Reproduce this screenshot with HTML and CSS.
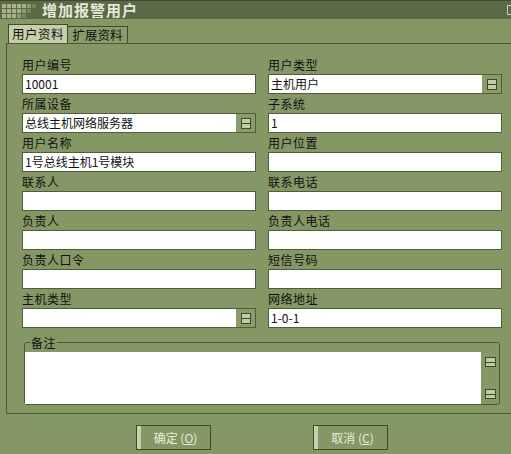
FILE: index.html
```html
<!DOCTYPE html>
<html lang="zh-CN">
<head>
<meta charset="utf-8">
<title>增加报警用户</title>
<link rel="stylesheet" href="styles.css">
</head>
<body>
<div class="titlebar">
  <div class="grip">
    <span></span><span></span><span></span><span></span><span></span><span class="dim"></span><span class="faint"></span>
    <span></span><span></span><span></span><span></span><span class="dim"></span><span class="faint"></span><span class="off"></span>
    <span></span><span></span><span></span><span class="dim"></span><span class="faint"></span><span class="off"></span><span class="off"></span>
  </div>
  <div class="title">增加报警用户</div>
  <div class="close"></div>
</div>
<div class="tabs">
  <div class="tab active">用户资料</div>
  <div class="tab">扩展资料</div>
</div>
<div class="panel">
  <div class="grid">
    <div class="field"><div class="label">用户编号</div><div class="input">10001</div></div>
    <div class="field"><div class="label">用户类型</div><div class="input combo"><span class="ctext">主机用户</span><span class="cbtn"><i class="cicon"></i></span></div></div>
    <div class="field"><div class="label">所属设备</div><div class="input combo"><span class="ctext">总线主机网络服务器</span><span class="cbtn"><i class="cicon"></i></span></div></div>
    <div class="field"><div class="label">子系统</div><div class="input">1</div></div>
    <div class="field"><div class="label">用户名称</div><div class="input">1号总线主机1号模块</div></div>
    <div class="field"><div class="label">用户位置</div><div class="input"></div></div>
    <div class="field"><div class="label">联系人</div><div class="input"></div></div>
    <div class="field"><div class="label">联系电话</div><div class="input"></div></div>
    <div class="field"><div class="label">负责人</div><div class="input"></div></div>
    <div class="field"><div class="label">负责人电话</div><div class="input"></div></div>
    <div class="field"><div class="label">负责人口令</div><div class="input"></div></div>
    <div class="field"><div class="label">短信号码</div><div class="input"></div></div>
    <div class="field"><div class="label">主机类型</div><div class="input combo"><span class="ctext"></span><span class="cbtn"><i class="cicon"></i></span></div></div>
    <div class="field"><div class="label">网络地址</div><div class="input">1-0-1</div></div>
  </div>
  <div class="group">
    <div class="legend">备注</div>
    <div class="memo">
      <div class="memo-text"></div>
      <div class="scroll"><i class="sbtn"></i><i class="sbtn"></i></div>
    </div>
  </div>
</div>
<div class="footer">
  <button class="btn">确定 (<u>O</u>)</button>
  <button class="btn">取消 (<u>C</u>)</button>
</div>
</body>
</html>
```
FILE: styles.css
```css
* { box-sizing: border-box; }
html, body { margin: 0; padding: 0; }
body {
  width: 511px;
  height: 454px;
  overflow: hidden;
  background: #849765;
  font-family: "Noto Sans CJK SC", "Noto Sans", sans-serif;
  font-size: 12px;
  color: #111;
}

.titlebar {
  position: relative;
  height: 19px;
  background: #5a6a46;
  border-top: 1px solid #3e4a30;
  display: flex;
  align-items: center;
}
.grip {
  display: grid;
  grid-template-columns: repeat(7, 4px);
  grid-auto-rows: 4px;
  gap: 1px;
  margin-left: 2px;
  margin-top: 1px;
}
.grip span { background: #a8b38d; }
.grip span.dim { background: #8e9a74; }
.grip span.faint { background: #76845e; }
.grip span.off { background: transparent; }
.title {
  margin-left: 6px;
  font-size: 15px;
  font-weight: bold;
  line-height: 18px;
  color: #e4e9d7;
  letter-spacing: 1px;
}
.close {
  position: absolute;
  right: -6px;
  top: 4px;
  width: 10px;
  height: 10px;
  border: 1px solid #c9d0b0;
}

.tabs {
  display: flex;
  align-items: flex-end;
  height: 19px;
  margin-top: 5px;
  padding-left: 8px;
}
.tab {
  width: 60px;
  height: 17px;
  border: 1px solid #3f4b30;
  border-bottom: none;
  border-left: none;
  background: #899c6b;
  font-size: 12.5px;
  line-height: 16px;
  text-align: center;
}
.tab.active {
  height: 19px;
  border-left: 1px solid #3f4b30;
  background: #c7cfaa;
  line-height: 18px;
  letter-spacing: 0.5px;
}

.panel {
  margin-left: 6px;
  border-left: 1px solid #4a5836;
  border-top: 1px solid #4a5836;
  border-bottom: 1px solid #4a5836;
  padding: 11px 0 8px 15px;
}
.grid {
  display: grid;
  grid-template-columns: 234px 234px;
  column-gap: 12px;
}
.label {
  height: 19px;
  line-height: 19px;
  font-size: 12px;
  letter-spacing: 0.5px;
}
.input {
  height: 20px;
  background: #fff;
  border: 1px solid #4f5d3b;
  line-height: 18px;
  padding-left: 2px;
  font-size: 12px;
  display: flex;
}
.input.combo { padding-left: 0; }
.ctext { flex: 1; padding-left: 2px; }
.cbtn {
  width: 19px;
  background: #8a9c6c;
  display: flex;
  align-items: center;
  justify-content: center;
}
.cicon, .sbtn {
  display: block;
  width: 10px;
  height: 11px;
  border: 1px solid #3c4a2c;
  background: linear-gradient(#3c4a2c, #3c4a2c) center / 100% 1px no-repeat, #c3cba5;
}

.group {
  position: relative;
  margin-top: 14px;
  margin-left: 2px;
  width: 476px;
  border: 1px solid #4a5836;
  border-radius: 3px;
  padding-top: 9px;
}
.legend {
  position: absolute;
  top: -7px;
  left: 5px;
  padding: 0 1px;
  background: #849765;
  font-size: 12px;
  line-height: 14px;
  letter-spacing: 0.5px;
}
.memo {
  display: flex;
  height: 52px;
}
.memo-text { flex: 1; background: #fff; }
.scroll {
  width: 18px;
  padding: 5px 0;
  display: flex;
  flex-direction: column;
  align-items: center;
  justify-content: space-between;
}
.sbtn { width: 11px; height: 10px; }

.footer {
  display: flex;
  gap: 102px;
  padding: 11px 0 0 136px;
}
.btn {
  width: 75px;
  height: 25px;
  margin: 0;
  padding: 0 0 0 4px;
  border: 1px solid #3d4930;
  box-shadow: inset 4px 0 0 #c8d0ac;
  background: #849765;
  font-family: "Noto Sans CJK SC", "Noto Sans", sans-serif;
  font-size: 12px;
  line-height: 22px;
  color: #e8eedb;
  text-align: center;
}
.btn u { text-underline-offset: 1px; }
```
